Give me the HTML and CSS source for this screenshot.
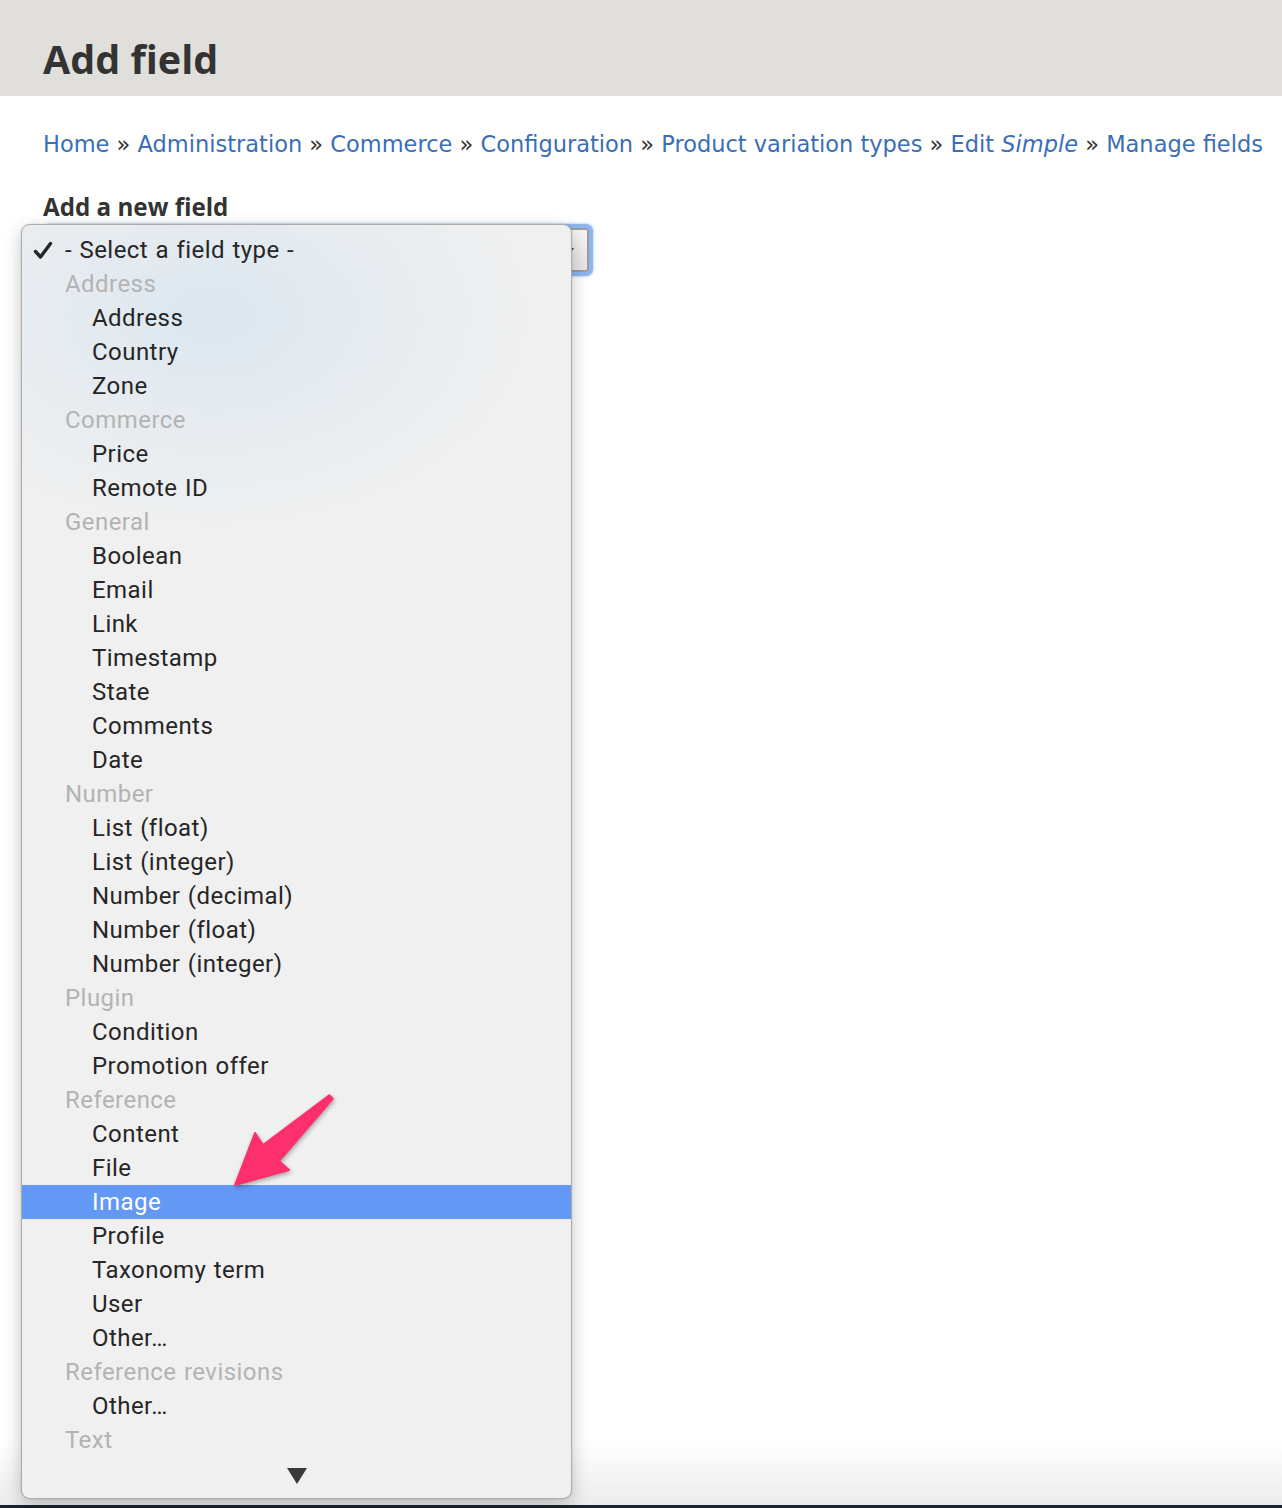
FILE: index.html
```html
<!DOCTYPE html>
<html lang="en">
<head>
<meta charset="utf-8">
<title>Add field</title>
<link rel="stylesheet" href="styles.css">
</head>
<body>
<header class="page-header">
  <h1 class="page-title">Add field</h1>
</header>
<main class="content">
  <nav class="breadcrumb">
    <a href="#">Home</a> <span class="sep">»</span> <a href="#">Administration</a> <span class="sep">»</span> <a href="#">Commerce</a> <span class="sep">»</span> <a href="#">Configuration</a> <span class="sep">»</span> <a href="#">Product variation types</a> <span class="sep">»</span> <a href="#">Edit <em>Simple</em></a> <span class="sep">»</span> <a href="#">Manage fields</a>
  </nav>
  <form class="form">
    <div class="form-item">
      <label class="form-label">Add a new field</label>
      <div class="select-wrap">
        <div class="select"><span class="select-arrow"></span></div>
        <div class="menu" role="listbox">
          <div class="opt top selected">
            <svg class="check" width="20" height="20" viewBox="0 0 20 20"><path d="M2.5 10.5 L7.5 16 L17.5 2.5" fill="none" stroke="#262626" stroke-width="3.4" stroke-linecap="round" stroke-linejoin="round"/></svg>
            - Select a field type -
          </div>
          <div class="opt group">Address</div>
          <div class="opt sub">Address</div>
          <div class="opt sub">Country</div>
          <div class="opt sub">Zone</div>
          <div class="opt group">Commerce</div>
          <div class="opt sub">Price</div>
          <div class="opt sub">Remote ID</div>
          <div class="opt group">General</div>
          <div class="opt sub">Boolean</div>
          <div class="opt sub">Email</div>
          <div class="opt sub">Link</div>
          <div class="opt sub">Timestamp</div>
          <div class="opt sub">State</div>
          <div class="opt sub">Comments</div>
          <div class="opt sub">Date</div>
          <div class="opt group">Number</div>
          <div class="opt sub">List (float)</div>
          <div class="opt sub">List (integer)</div>
          <div class="opt sub">Number (decimal)</div>
          <div class="opt sub">Number (float)</div>
          <div class="opt sub">Number (integer)</div>
          <div class="opt group">Plugin</div>
          <div class="opt sub">Condition</div>
          <div class="opt sub">Promotion offer</div>
          <div class="opt group">Reference</div>
          <div class="opt sub">Content</div>
          <div class="opt sub">File</div>
          <div class="opt sub active">Image</div>
          <div class="opt sub">Profile</div>
          <div class="opt sub">Taxonomy term</div>
          <div class="opt sub">User</div>
          <div class="opt sub">Other…</div>
          <div class="opt group">Reference revisions</div>
          <div class="opt sub">Other…</div>
          <div class="opt group">Text</div>
          <div class="scroll-more">
            <svg width="20" height="16" viewBox="0 0 20 16"><polygon points="0,0 20,0 10,16" fill="#3a3a3a"/></svg>
          </div>
        </div>
      </div>
    </div>
  </form>
</main>
<svg class="annotation" width="1282" height="1508" viewBox="0 0 1282 1508">
  <polygon points="235,1185 255,1133 263,1145 329.3,1095.2 332.7,1098.8 279,1161 289,1170" fill="#fd2f6c" stroke="#fd2f6c" stroke-width="2" stroke-linejoin="round"/>
</svg>
</body>
</html>
```

FILE: styles.css
```css
html {
  background: #ffffff;
}
body {
  margin: 0;
  height: 1508px;
  overflow: hidden;
  position: relative;
  font-family: "Open Sans", "DejaVu Sans", sans-serif;
  color: #333333;
  background: linear-gradient(to bottom, #ffffff 0, #ffffff 1440px, #ececec 1505px, #1c2331 1505px, #1c2331 1508px);
}
.page-header {
  background: #e0dfdb;
  height: 96px;
  box-sizing: border-box;
  padding: 36px 0 0 43px;
}
.page-title {
  margin: 0;
  font-size: 39.5px;
  line-height: 47px;
  font-weight: 700;
  color: #333333;
}
.content {
  padding: 33px 0 0 43px;
}
.breadcrumb {
  font-family: "DejaVu Sans", "Open Sans", sans-serif;
  font-size: 22.5px;
  line-height: 30px;
  white-space: nowrap;
}
.breadcrumb a {
  color: #3a6eb5;
  text-decoration: none;
}
.breadcrumb .sep {
  color: #333333;
}
.form {
  margin-top: 33px;
}
.form-label {
  display: block;
  font-size: 24.2px;
  line-height: 30px;
  font-weight: 700;
  color: #333333;
}
.select-wrap {
  position: relative;
  margin-top: 1px;
  padding: 5px;
  width: 541px;
}
.select {
  height: 44px;
  box-sizing: border-box;
  border: 2px solid #9c9c9c;
  border-radius: 3px;
  background: linear-gradient(to bottom, #f6f6f6, #e4e4e4);
  box-shadow: 0 0 0 4px #8db6f0, 0 0 2px 5px rgba(141, 182, 240, 0.5);
  position: relative;
}
.select-arrow {
  position: absolute;
  right: 13px;
  top: 18px;
  width: 0;
  height: 0;
  border-left: 4px solid transparent;
  border-right: 4px solid transparent;
  border-top: 5px solid #333333;
}
.menu {
  position: absolute;
  left: -22px;
  top: 1px;
  width: 551px;
  box-sizing: border-box;
  padding: 8px 0 7px;
  border: 1px solid #adadad;
  border-radius: 9px;
  background: radial-gradient(ellipse 330px 220px at 190px 90px, rgba(214, 228, 240, 0.75), rgba(240, 240, 240, 0) 100%), #f0f0f0;
  box-shadow: 0 6px 18px rgba(0, 0, 0, 0.22), 0 0 2px rgba(0, 0, 0, 0.15);
  font-family: Roboto, "Liberation Sans", sans-serif;
  font-size: 24px;
  letter-spacing: 0.45px;
  word-spacing: 1px;
  color: #262626;
  z-index: 2;
}
.opt {
  height: 34px;
  line-height: 34px;
  white-space: nowrap;
  position: relative;
}
.opt.top,
.opt.group {
  padding-left: 43px;
}
.opt.sub {
  padding-left: 70px;
}
.opt.group {
  color: #b3b3b3;
}
.opt.active {
  background: #6399f5;
  color: #ffffff;
}
.check {
  position: absolute;
  left: 11px;
  top: 8px;
}
.scroll-more {
  height: 34px;
  display: flex;
  justify-content: center;
  align-items: center;
}
.scroll-more svg {
  display: block;
  margin-top: 3px;
}
.annotation {
  position: absolute;
  left: 0;
  top: 0;
  pointer-events: none;
  z-index: 5;
  filter: drop-shadow(1px 2px 2px rgba(0, 0, 0, 0.3));
}
```
